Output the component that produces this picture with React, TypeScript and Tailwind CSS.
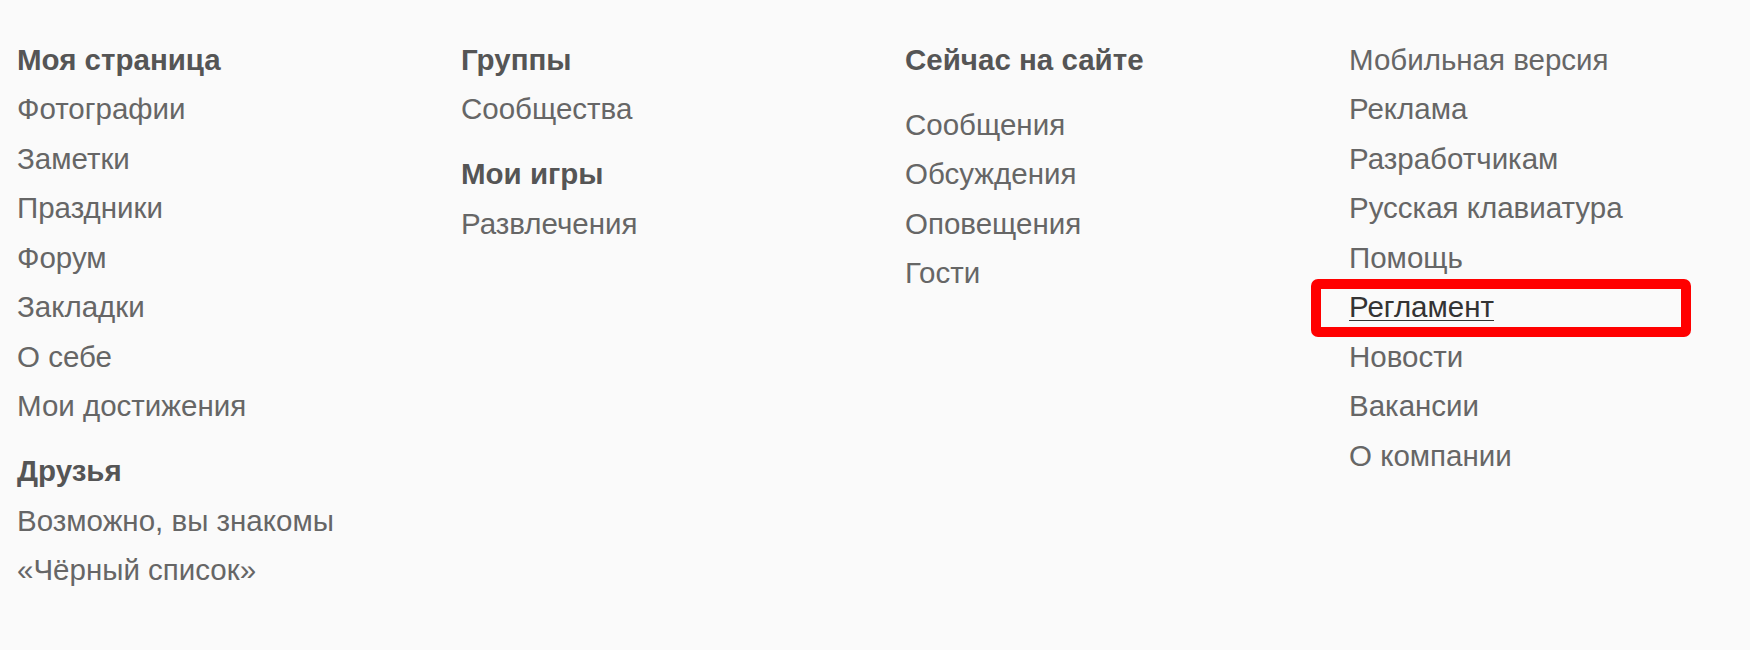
import React from 'react';

type Item = { text: string; head?: boolean; gapTop?: boolean; marked?: boolean };

const columns: Item[][] = [
    [
        { text: 'Моя страница', head: true },
        { text: 'Фотографии' },
        { text: 'Заметки' },
        { text: 'Праздники' },
        { text: 'Форум' },
        { text: 'Закладки' },
        { text: 'О себе' },
        { text: 'Мои достижения' },
        { text: 'Друзья', head: true, gapTop: true },
        { text: 'Возможно, вы знакомы' },
        { text: '«Чёрный список»' },
    ],
    [
        { text: 'Группы', head: true },
        { text: 'Сообщества' },
        { text: 'Мои игры', head: true, gapTop: true },
        { text: 'Развлечения' },
    ],
    [
        { text: 'Сейчас на сайте', head: true },
        { text: 'Сообщения', gapTop: true },
        { text: 'Обсуждения' },
        { text: 'Оповещения' },
        { text: 'Гости' },
    ],
    [
        { text: 'Мобильная версия' },
        { text: 'Реклама' },
        { text: 'Разработчикам' },
        { text: 'Русская клавиатура' },
        { text: 'Помощь' },
        { text: 'Регламент', marked: true },
        { text: 'Новости' },
        { text: 'Вакансии' },
        { text: 'О компании' },
    ],
];

function Row({ item }: { item: Item }) {
    if (item.head) {
        return (
            <div className={`font-bold text-[#555] ${item.gapTop ? 'mt-[15.5px]' : ''}`}>{item.text}</div>
        );
    }
    if (item.marked) {
        return (
            <div className="relative">
                <a href="#" className="text-[#333] underline underline-offset-[3px] decoration-1">{item.text}</a>
                <span className="absolute -left-[38px] -top-[3px] w-[380px] h-[58px] border-[10px] border-[#ff0000] rounded-[7px] pointer-events-none" />
            </div>
        );
    }
    return (
        <div className={item.gapTop ? 'mt-[15.5px]' : ''}>
            <a href="#" className="text-[#666]">{item.text}</a>
        </div>
    );
}

export default function App() {
    return (
        <div className="w-[1750px] h-[650px] bg-[#fafafa] overflow-hidden font-['Liberation_Sans',Arial,sans-serif] text-[29.5px] leading-[49.5px] text-[#666]">
            <div className="grid grid-cols-[444px_444px_444px_1fr] pl-[17px] pt-[34.5px]">
                {columns.map((col, i) => (
                    <div key={i} className="flex flex-col">
                        {col.map((item, j) => (
                            <Row key={j} item={item} />
                        ))}
                    </div>
                ))}
            </div>
        </div>
    );
}
